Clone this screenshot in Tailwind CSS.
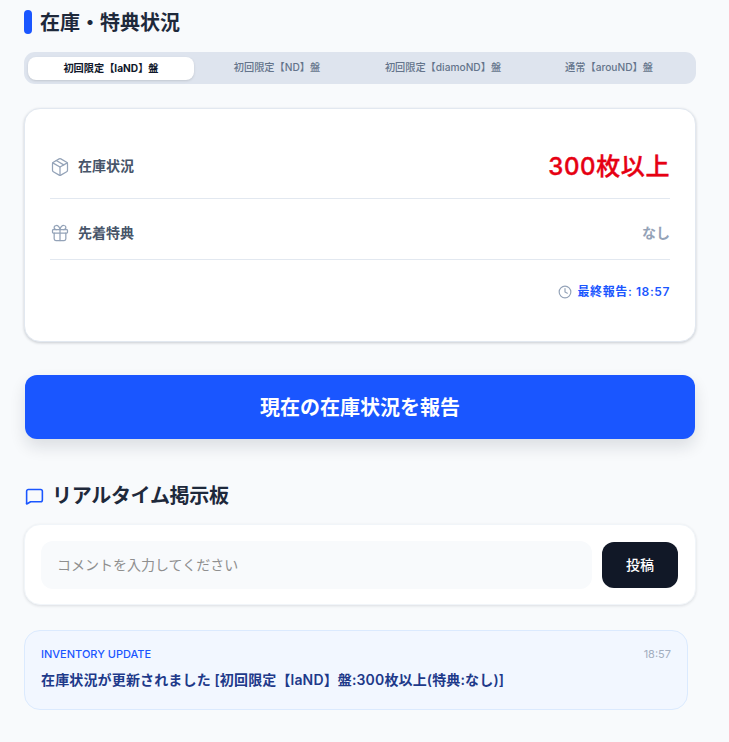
<!DOCTYPE html>
<html lang="ja">
<head>
    <meta charset="UTF-8">
    <meta name="viewport" content="width=device-width, initial-scale=1.0">
    <title>在庫・特典状況</title>
    <script src="https://cdn.jsdelivr.net/npm/@tailwindcss/browser@4"></script>
</head>
<body class="bg-[#f8fafc] font-['Inter','Noto_Sans_CJK_JP',sans-serif] h-[742px] overflow-hidden">

    <div class="pt-[10px] px-6">
        <!-- Stock section title -->
        <div class="flex items-center gap-2 h-6">
            <span class="w-2 h-6 rounded-full bg-[#1a56ff]"></span>
            <h2 class="text-xl font-bold text-[#1e293b] leading-6 pt-px">在庫・特典状況</h2>
        </div>

        <!-- Edition tabs -->
        <div class="mt-[18px] h-8 w-[672px] rounded-[11px] bg-[#dee4ee] p-1 grid grid-cols-4 items-center text-center text-[10.2px] text-[#64748b] font-medium">
            <div class="h-[23px] leading-[23px] rounded-lg bg-white text-[#0f172a] font-bold shadow-sm">初回限定【laND】盤</div>
            <div>初回限定【ND】盤</div>
            <div>初回限定【diamoND】盤</div>
            <div>通常【arouND】盤</div>
        </div>

        <!-- Stock card -->
        <div class="mt-6 w-[672px] h-[234px] rounded-2xl bg-white border border-[#e2e8f0] shadow-[0_1px_3px_rgba(15,23,42,0.2)] px-[25px] pt-[26px]">
            <div class="flex items-center justify-between h-[64px] border-b border-[#e2e8f0]">
                <div class="flex items-center gap-2 text-sm font-semibold text-[#475569]">
                    <svg class="w-5 h-5 text-[#94a3b8]" viewBox="0 0 24 24" fill="none" stroke="currentColor" stroke-width="1.5" stroke-linecap="round" stroke-linejoin="round">
                        <path d="M21 8a2 2 0 0 0-1-1.73l-7-4a2 2 0 0 0-2 0l-7 4A2 2 0 0 0 3 8v8a2 2 0 0 0 1 1.73l7 4a2 2 0 0 0 2 0l7-4A2 2 0 0 0 21 16Z"/>
                        <path d="m3.3 7 8.7 5 8.7-5"/>
                        <path d="M12 22V12"/>
                        <path d="m7.5 4.27 9 5.15"/>
                    </svg>
                    <span class="-mt-0.5">在庫状況</span>
                </div>
                <span class="text-2xl font-medium tracking-[0.6px] text-[#e60012] [-webkit-text-stroke:0.4px_#e60012]">300枚以上</span>
            </div>
            <div class="flex items-center justify-between h-[61px] pt-2 border-b border-[#e2e8f0]">
                <div class="flex items-center gap-2 text-sm font-semibold text-[#475569]">
                    <svg class="w-5 h-5 text-[#94a3b8]" viewBox="0 0 24 24" fill="none" stroke="currentColor" stroke-width="1.5" stroke-linecap="round" stroke-linejoin="round">
                        <rect x="3" y="8" width="18" height="4" rx="1"/>
                        <path d="M12 8v13"/>
                        <path d="M19 12v7a2 2 0 0 1-2 2H7a2 2 0 0 1-2-2v-7"/>
                        <path d="M7.5 8a2.5 2.5 0 0 1 0-5A4.8 8 0 0 1 12 8a4.8 8 0 0 1 4.5-5 2.5 2.5 0 0 1 0 5"/>
                    </svg>
                    <span>先着特典</span>
                </div>
                <span class="text-sm font-semibold text-[#94a3b8]">なし</span>
            </div>
            <div class="flex items-center justify-end gap-[6px] mt-6 h-4 text-xs font-semibold tracking-[0.6px] text-[#1a56ff]">
                <svg class="w-[14px] h-[14px] text-[#94a3b8]" viewBox="0 0 24 24" fill="none" stroke="currentColor" stroke-width="2" stroke-linecap="round" stroke-linejoin="round">
                    <circle cx="12" cy="12" r="10"/>
                    <path d="M12 6v6l4 2"/>
                </svg>
                <span>最終報告: 18:57</span>
            </div>
        </div>

        <!-- Report button -->
        <button class="block mt-[33px] ml-px w-[670px] h-16 pt-0.5 rounded-xl bg-[#1a56ff] text-white text-xl font-semibold shadow-[0_8px_16px_rgba(15,23,42,0.12)]">現在の在庫状況を報告</button>

        <!-- Board title -->
        <div class="flex items-center gap-[7px] mt-[45px] h-6">
            <svg class="w-[21px] h-[21px] text-[#1a56ff]" viewBox="0 0 24 24" fill="none" stroke="currentColor" stroke-width="1.8" stroke-linecap="round" stroke-linejoin="round">
                <path d="M3 19.5V6a2 2 0 0 1 2-2h14a2 2 0 0 1 2 2v10a2 2 0 0 1-2 2H7.5L3.7 20.3a.5.5 0 0 1-.7-.8Z"/>
            </svg>
            <h2 class="text-xl font-bold tracking-[-0.3px] text-[#1e293b] leading-6">リアルタイム掲示板</h2>
        </div>

        <!-- Comment form -->
        <div class="mt-4 w-[672px] h-[81px] rounded-2xl bg-white border border-[#f1f5f9] shadow-[0_1px_3px_rgba(15,23,42,0.12)] flex items-center gap-[10px] pl-4 pr-[17px]">
            <input type="text" placeholder="コメントを入力してください" class="w-[552px] h-12 rounded-xl bg-[#f8fafc] px-4 text-sm outline-none placeholder:text-[#8f8f8f]">
            <button class="w-[76px] h-[46px] rounded-xl bg-[#111827] text-white text-sm font-medium">投稿</button>
        </div>

        <!-- Feed item -->
        <div class="mt-[25px] w-[664px] h-[80px] rounded-2xl bg-[#f2f7ff] border border-[#dbeafe] px-4 pt-4">
            <div class="flex items-center justify-between h-[15px]">
                <span class="text-[11px] font-medium text-[#1a56ff]">INVENTORY UPDATE</span>
                <span class="text-[11px] text-[#a3aec0]">18:57</span>
            </div>
            <p class="mt-2 text-sm font-semibold tracking-[0.15px] text-[#1e3a8a] leading-5">在庫状況が更新されました [初回限定【laND】盤:300枚以上(特典:なし)]</p>
        </div>
    </div>

</body>
</html>
